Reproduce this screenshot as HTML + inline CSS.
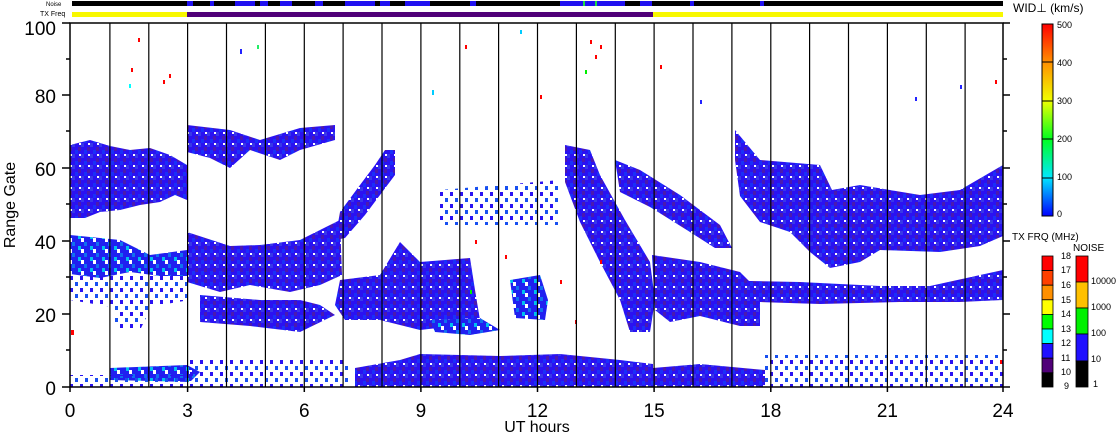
<!DOCTYPE html>
<html><head><meta charset="utf-8"><style>
html,body{margin:0;padding:0;background:#fff;}
svg{display:block;font-family:"Liberation Sans",sans-serif;}
</style></head><body>
<svg width="1118" height="435" viewBox="0 0 1118 435" xmlns="http://www.w3.org/2000/svg">
<defs>
<pattern id="tex" width="9" height="11" patternUnits="userSpaceOnUse">
<rect width="9" height="11" fill="#2a12f2"/>
<rect x="0" y="0" width="3" height="4" fill="#3838e8"/>
<rect x="6" y="4" width="3" height="4" fill="#4a1ab0"/>
<rect x="3" y="7" width="3" height="4" fill="#1a30f8"/>
<rect x="7" y="0" width="2" height="2" fill="#fff"/>
</pattern>
<pattern id="tex2" width="12" height="11" patternUnits="userSpaceOnUse">
<rect width="12" height="11" fill="#2020f0"/>
<rect x="0" y="0" width="3" height="4" fill="#1070f0"/>
<rect x="6" y="4" width="3" height="4" fill="#00c0f0"/>
<rect x="9" y="7" width="3" height="4" fill="#fff"/>
</pattern>
<pattern id="sparse" width="10" height="12" patternUnits="userSpaceOnUse">
<rect x="0" y="0" width="3" height="4" fill="#2a12f2"/>
<rect x="5" y="6" width="3" height="4" fill="#1850f0"/>
</pattern>
<linearGradient id="wid" x1="0" y1="1" x2="0" y2="0">
<stop offset="0" stop-color="#0000ff"/>
<stop offset="0.2" stop-color="#00e8ff"/>
<stop offset="0.4" stop-color="#00ff20"/>
<stop offset="0.6" stop-color="#f0ff00"/>
<stop offset="0.8" stop-color="#ff9000"/>
<stop offset="1" stop-color="#ff0000"/>
</linearGradient>
</defs>

<!-- top bars -->
<text x="46" y="6" font-size="6">Noise</text>
<text x="40" y="16" font-size="7">TX Freq</text>
<rect x="72" y="1" width="931" height="5" fill="#000"/>
<rect x="187" y="1" width="6" height="5" fill="#2010f0"/>
<rect x="210" y="1" width="4" height="5" fill="#2010f0"/>
<rect x="235" y="1" width="20" height="5" fill="#2010f0"/>
<rect x="260" y="1" width="8" height="5" fill="#2010f0"/>
<rect x="280" y="1" width="12" height="5" fill="#2010f0"/>
<rect x="315" y="1" width="8" height="5" fill="#2010f0"/>
<rect x="345" y="1" width="30" height="5" fill="#2010f0"/>
<rect x="380" y="1" width="10" height="5" fill="#2010f0"/>
<rect x="405" y="1" width="25" height="5" fill="#2010f0"/>
<rect x="470" y="1" width="6" height="5" fill="#2010f0"/>
<rect x="560" y="1" width="65" height="5" fill="#2010f0"/>
<rect x="583" y="1" width="2" height="5" fill="#20e040"/>
<rect x="595" y="1" width="2" height="5" fill="#20e040"/>
<rect x="640" y="1" width="12" height="5" fill="#2010f0"/>
<rect x="690" y="1" width="4" height="5" fill="#2010f0"/>
<rect x="760" y="1" width="4" height="5" fill="#2010f0"/>
<rect x="72" y="12" width="115" height="5" fill="#f8f800"/>
<rect x="187" y="12" width="466" height="5" fill="#500078"/>
<rect x="653" y="12" width="350" height="5" fill="#f8f800"/>

<!-- data blobs -->
<g fill="url(#tex)">
<polygon points="70,145 90,140 110,146 130,150 150,148 170,155 187,165 187,200 175,195 160,202 140,205 120,210 100,212 85,218 70,218"/>
<polygon points="187,125 230,130 260,140 300,128 335,125 335,140 300,150 280,160 250,150 230,168 210,158 187,152"/>
<polygon points="340,212 360,185 375,165 385,150 395,150 395,175 380,195 365,215 345,238 335,240"/>
<polygon points="187,232 230,246 260,245 300,240 340,220 342,275 320,285 290,292 250,285 220,292 187,282"/>
<polygon points="200,295 260,300 300,300 320,305 335,315 300,332 250,326 200,322"/>
<polygon points="340,280 380,275 400,242 420,262 470,258 475,290 480,320 455,326 420,330 380,320 345,320 335,305"/>
<polygon points="355,368 400,360 420,354 500,356 560,354 620,360 653,364 653,387 355,387"/>
<polygon points="565,145 590,150 600,175 625,220 650,262 655,300 650,332 630,332 620,300 600,262 580,222 565,182"/>
<polygon points="615,160 640,170 680,195 720,225 732,248 715,248 690,232 650,207 620,192"/>
<polygon points="652,255 700,262 740,272 760,292 760,326 740,326 700,316 670,322 655,310"/>
<polygon points="700,280 800,282 880,286 930,286 1003,270 1003,300 960,302 900,302 820,304 760,302 700,302"/>
<polygon points="735,130 760,160 820,165 832,190 860,185 920,195 960,190 1003,165 1003,236 980,246 940,252 880,250 860,262 830,268 810,252 790,232 760,222 740,196 735,160"/>
<polygon points="653,368 700,364 765,370 765,387 653,387"/>
</g>
<g fill="url(#tex2)">
<polygon points="70,235 120,240 150,255 187,250 187,276 160,276 130,272 100,278 70,274"/>
<polygon points="510,280 540,275 548,300 545,320 515,318"/>
<polygon points="430,320 480,318 500,330 470,335 435,332"/>
<polygon points="110,368 187,365 200,372 190,382 110,380"/>
</g>
<g fill="url(#sparse)">
<polygon points="70,276 190,276 190,300 130,310 70,300"/>
<polygon points="765,355 1003,355 1003,387 765,387"/>
<polygon points="190,360 350,360 350,387 190,387"/>
<polygon points="70,375 190,375 190,387 70,387"/>
<polygon points="440,190 560,180 560,225 440,225"/>
<polygon points="115,290 160,290 140,330 115,330"/>
</g>
<!-- scattered points -->
<g>
<rect x="138" y="38" width="2" height="4" fill="#f00"/><rect x="131" y="68" width="2" height="4" fill="#f00"/>
<rect x="163" y="80" width="2" height="4" fill="#f00"/><rect x="169" y="74" width="2" height="4" fill="#f00"/>
<rect x="129" y="84" width="2" height="4" fill="#0ff"/><rect x="240" y="49" width="2" height="5" fill="#22f"/>
<rect x="257" y="45" width="2" height="4" fill="#2e6"/><rect x="520" y="30" width="2" height="4" fill="#0cf"/>
<rect x="465" y="45" width="2" height="4" fill="#f00"/><rect x="590" y="40" width="2" height="4" fill="#f00"/>
<rect x="595" y="55" width="2" height="4" fill="#f00"/><rect x="600" y="45" width="2" height="4" fill="#f00"/>
<rect x="585" y="70" width="2" height="4" fill="#0e0"/><rect x="660" y="65" width="2" height="4" fill="#f00"/>
<rect x="915" y="97" width="2" height="4" fill="#22f"/><rect x="960" y="85" width="2" height="4" fill="#22f"/>
<rect x="432" y="90" width="2" height="5" fill="#0cf"/><rect x="540" y="95" width="2" height="4" fill="#f00"/>
<rect x="700" y="100" width="2" height="4" fill="#22f"/><rect x="995" y="80" width="2" height="4" fill="#f00"/>
<rect x="71" y="330" width="3" height="5" fill="#f00"/><rect x="475" y="240" width="2" height="4" fill="#f00"/>
<rect x="505" y="255" width="2" height="4" fill="#f00"/><rect x="560" y="280" width="2" height="4" fill="#f00"/>
<rect x="600" y="260" width="2" height="4" fill="#f00"/><rect x="575" y="320" width="2" height="4" fill="#f00"/>
<rect x="470" y="290" width="2" height="4" fill="#0e0"/><rect x="1000" y="360" width="2" height="4" fill="#f00"/>
</g>

<!-- vertical hour lines -->
<g stroke="#000" stroke-width="1.2">
<line x1="109.9" y1="23" x2="109.9" y2="387"/><line x1="148.8" y1="23" x2="148.8" y2="387"/>
<line x1="187.6" y1="23" x2="187.6" y2="387"/><line x1="226.5" y1="23" x2="226.5" y2="387"/>
<line x1="265.4" y1="23" x2="265.4" y2="387"/><line x1="304.3" y1="23" x2="304.3" y2="387"/>
<line x1="343.1" y1="23" x2="343.1" y2="387"/><line x1="382" y1="23" x2="382" y2="387"/>
<line x1="420.9" y1="23" x2="420.9" y2="387"/><line x1="459.8" y1="23" x2="459.8" y2="387"/>
<line x1="498.6" y1="23" x2="498.6" y2="387"/><line x1="537.5" y1="23" x2="537.5" y2="387"/>
<line x1="576.4" y1="23" x2="576.4" y2="387"/><line x1="615.3" y1="23" x2="615.3" y2="387"/>
<line x1="654.1" y1="23" x2="654.1" y2="387"/><line x1="693" y1="23" x2="693" y2="387"/>
<line x1="731.9" y1="23" x2="731.9" y2="387"/><line x1="770.8" y1="23" x2="770.8" y2="387"/>
<line x1="809.6" y1="23" x2="809.6" y2="387"/><line x1="848.5" y1="23" x2="848.5" y2="387"/>
<line x1="887.4" y1="23" x2="887.4" y2="387"/><line x1="926.3" y1="23" x2="926.3" y2="387"/>
<line x1="965.1" y1="23" x2="965.1" y2="387"/>
</g>
<!-- axes -->
<g stroke="#000" stroke-width="1.5" fill="none">
<rect x="70" y="23" width="933" height="364"/>
<path d="M62 387H70M62 314H70M62 241H70M62 168H70M62 95H70M62 23H70M66 350H70M66 277H70M66 204H70M66 131H70M66 59H70"/>
<path d="M1003 387H1010M1003 314H1010M1003 241H1010M1003 168H1010M1003 95H1010M1003 23H1010M1003 350H1007M1003 277H1007M1003 204H1007M1003 131H1007M1003 59H1007"/>
<path d="M70 387V392M187.6 387V392M304.3 387V392M420.9 387V392M537.5 387V392M654.1 387V392M770.8 387V392M887.4 387V392M1003 387V392"/>
</g>
<g font-size="19" fill="#000" text-anchor="end">
<text x="56" y="35">100</text><text x="56" y="103">80</text><text x="56" y="176">60</text>
<text x="56" y="249">40</text><text x="56" y="322">20</text><text x="56" y="395">0</text>
</g>
<g font-size="19" fill="#000" text-anchor="middle">
<text x="70" y="417">0</text><text x="187.6" y="417">3</text><text x="304.3" y="417">6</text>
<text x="420.9" y="417">9</text><text x="537.5" y="417">12</text><text x="654.1" y="417">15</text>
<text x="770.8" y="417">18</text><text x="887.4" y="417">21</text><text x="1003" y="417">24</text>
<text x="537" y="432" font-size="16">UT hours</text>
<text transform="translate(15,205) rotate(-90)" font-size="16">Range Gate</text>
</g>

<!-- WID colorbar -->
<text x="1013" y="12" font-size="12">WID⊥ (km/s)</text>
<rect x="1042" y="24" width="11" height="192" fill="url(#wid)" stroke="#000" stroke-width="1"/>
<g stroke="#000" stroke-width="1"><line x1="1042" y1="62" x2="1053" y2="62"/><line x1="1042" y1="101" x2="1053" y2="101"/><line x1="1042" y1="139" x2="1053" y2="139"/><line x1="1042" y1="178" x2="1053" y2="178"/></g>
<g font-size="9" fill="#000">
<text x="1057" y="28">500</text><text x="1057" y="66">400</text><text x="1057" y="104">300</text>
<text x="1057" y="142">200</text><text x="1057" y="180">100</text><text x="1057" y="217">0</text>
</g>

<!-- TX FRQ -->
<text x="1012" y="240" font-size="10">TX FRQ (MHz)</text>
<text x="1073" y="251" font-size="10">NOISE</text>
<g stroke="#000" stroke-width="0.8">
<rect x="1042" y="256" width="11" height="14.6" fill="#ff0000"/>
<rect x="1042" y="270.6" width="11" height="14.6" fill="#ff4000"/>
<rect x="1042" y="285.2" width="11" height="14.6" fill="#ff9000"/>
<rect x="1042" y="299.8" width="11" height="14.6" fill="#ffff00"/>
<rect x="1042" y="314.4" width="11" height="14.6" fill="#00ff00"/>
<rect x="1042" y="329" width="11" height="14.6" fill="#00ffff"/>
<rect x="1042" y="343.6" width="11" height="14.6" fill="#2010ff"/>
<rect x="1042" y="358.2" width="11" height="14.6" fill="#500078"/>
<rect x="1042" y="372.8" width="11" height="14.2" fill="#000"/>
<rect x="1076" y="256" width="12" height="26" fill="#ff0000"/>
<rect x="1076" y="282" width="12" height="26" fill="#ffc000"/>
<rect x="1076" y="308" width="12" height="26" fill="#00f000"/>
<rect x="1076" y="334" width="12" height="27" fill="#2010ff"/>
<rect x="1076" y="361" width="12" height="26" fill="#000"/>
</g>
<g font-size="9" fill="#000">
<text x="1061" y="259">18</text><text x="1061" y="273">17</text><text x="1061" y="288">16</text>
<text x="1061" y="303">15</text><text x="1061" y="317">14</text><text x="1061" y="332">13</text>
<text x="1061" y="346">12</text><text x="1061" y="361">11</text><text x="1061" y="375">10</text>
<text x="1064" y="389">9</text>
<text x="1091" y="284">10000</text><text x="1091" y="310">1000</text><text x="1091" y="336">100</text>
<text x="1091" y="362">10</text><text x="1093" y="387">1</text>
</g>
</svg>
</body></html>
